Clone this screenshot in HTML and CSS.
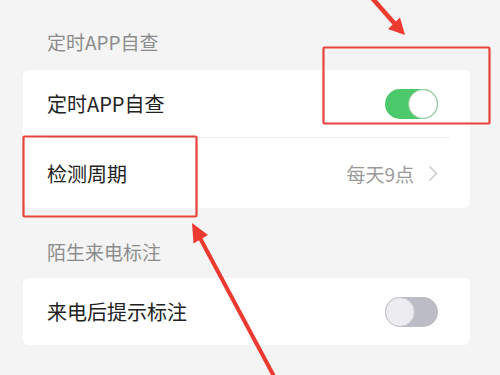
FILE: index.html
```html
<!DOCTYPE html>
<html lang="zh">
<head>
<meta charset="utf-8">
<link rel="stylesheet" href="styles.css">
</head>
<body>
<div class="page">
  <div class="section-title first">定时APP自查</div>
  <div class="card">
    <div class="row">
      <span class="label">定时APP自查</span>
      <span class="switch on"><span class="knob"></span></span>
    </div>
    <div class="divider"></div>
    <div class="row">
      <span class="label">检测周期</span>
      <span class="value">每天9点
        <svg class="chev" width="10" height="17" viewBox="0 0 10 17"><polyline points="1.5,1.5 8.5,8.5 1.5,15.5" fill="none" stroke="#c6c6c6" stroke-width="1.4"/></svg>
      </span>
    </div>
  </div>
  <div class="section-title">陌生来电标注</div>
  <div class="card">
    <div class="row">
      <span class="label">来电后提示标注</span>
      <span class="switch off"><span class="knob"></span></span>
    </div>
  </div>
</div>
<svg class="marks" width="500" height="375" viewBox="0 0 500 375">
  <rect x="323.5" y="47.5" width="166" height="76" fill="none" stroke="#e8433b" stroke-width="2.2" rx="1"/>
  <rect x="23.5" y="136.5" width="173" height="80" fill="none" stroke="#e8433b" stroke-width="2.2" rx="1"/>
  <line x1="372" y1="-2" x2="395" y2="24" stroke="#ec3a30" stroke-width="4.5"/>
  <polygon points="405,35 388,29 400,17.5" fill="#ec3a30"/>
  <line x1="276" y1="380" x2="200" y2="238" stroke="#ec3a30" stroke-width="4"/>
  <polygon points="192,223 208,235 193.5,243.5" fill="#ec3a30"/>
</svg>
</body>
</html>
```
FILE: styles.css
```css
html, body {
  margin: 0;
  padding: 0;
}
body {
  background: #f4f4f4;
  font-family: "Noto Sans CJK SC", "Noto Sans", sans-serif;
  width: 500px;
  height: 375px;
  overflow: hidden;
  position: relative;
}
.page {
  padding: 0 30px 0 23px;
}
.section-title {
  font-size: 19px;
  line-height: 24px;
  color: #8c8c8c;
  padding: 32px 0 14px 24px;
}
.section-title.first {
  padding-top: 30px;
  padding-bottom: 16px;
}
.card {
  background: #fff;
  border-radius: 6px;
}
.row {
  display: flex;
  align-items: center;
  justify-content: space-between;
  height: 68px;
  padding: 0 32px 0 24px;
}
.card .row:first-child { height: 67px; }
.label {
  font-size: 20px;
  color: #222;
}
.divider {
  height: 1px;
  background: #ececec;
  margin: 0 20px 0 24px;
}
.row + .divider + .row { height: 70px; }
.value {
  display: flex;
  align-items: center;
  gap: 14px;
  font-size: 19px;
  color: #9a9a9a;
}
.chev { display: block; }
.switch {
  width: 53px;
  height: 30px;
  border-radius: 15px;
  position: relative;
  box-sizing: border-box;
}
.switch.on { background: #4cc96a; }
.switch.off { background: #bcbcc7; }
.knob {
  position: absolute;
  top: 0;
  width: 30px;
  height: 30px;
  border-radius: 50%;
  box-sizing: border-box;
}
.switch.on .knob {
  right: 0;
  background: #fff;
  border: 1.5px solid #8fc79c;
}
.switch.off .knob {
  left: 0;
  background: #ececf1;
  border: 1.5px solid #c4c4cc;
}
.marks {
  position: absolute;
  left: 0;
  top: 0;
  pointer-events: none;
}
```
